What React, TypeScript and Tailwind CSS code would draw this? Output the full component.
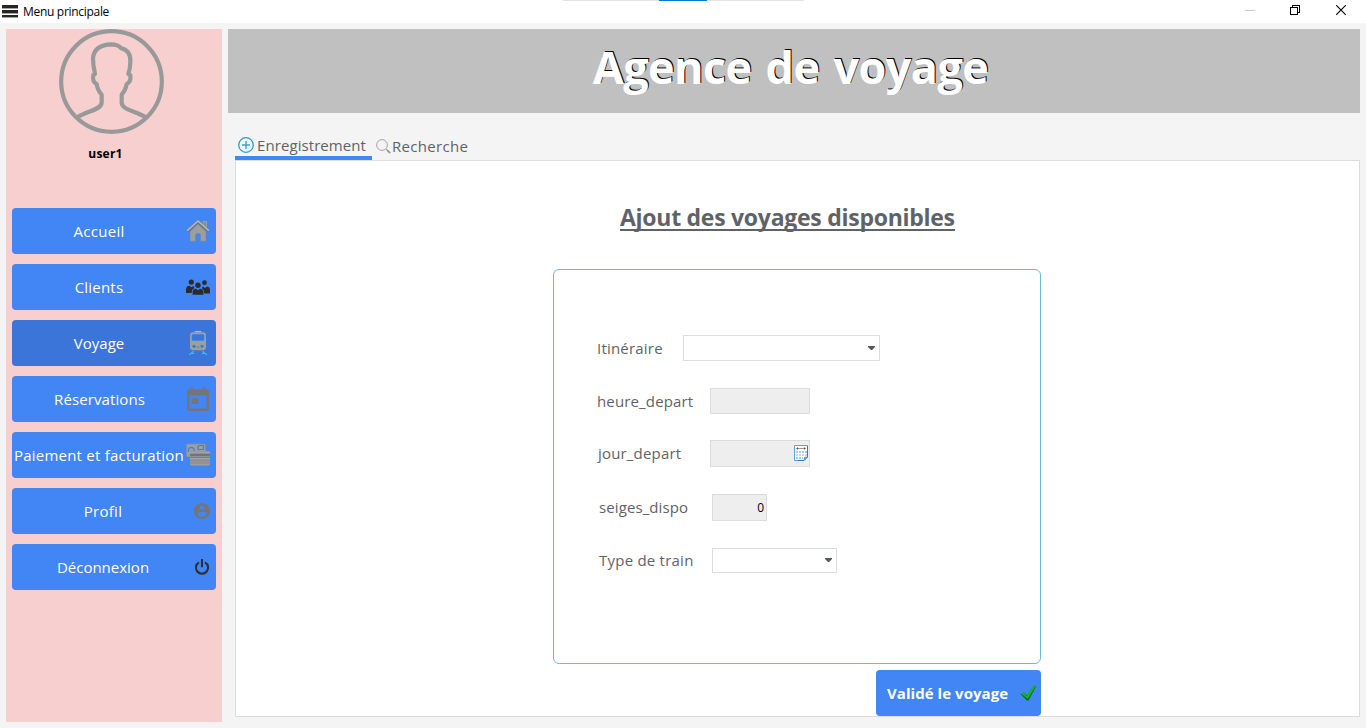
import type { ReactNode } from "react";

function HomeIcon() {
  return (
    <svg className="size-6 shrink-0" viewBox="0 0 24 24">
      <path d="M17 2.500h3.500v6L17 5.300z" fill="#8a8a8a" stroke="#b9b9b9" strokeWidth=".5" />
      <path d="M4 12.500 12 5l8 7.500V22.300h-5.500v-6.300q0-1.500-1.500-1.500h-2q-1.500 0-1.500 1.500v6.300H4z" fill="#9c9ea0" stroke="#808285" strokeWidth=".5" />
      <path d="M1 12.500 12 2.600l11 9.900" fill="none" stroke="#75777a" strokeWidth="2.800" />
      <path d="M1 11.800 12 1.900l11 9.900" fill="none" stroke="#b8babc" strokeWidth="1.500" />
    </svg>
  );
}

function PeopleIcon() {
  return (
    <svg className="size-6 shrink-0" viewBox="0 0 24 24" fill="#2b2b2b">
      <circle cx="5.300" cy="7.100" r="2.600" />
      <circle cx="18.500" cy="7.700" r="2.400" />
      <path d="M0 18v-3.500Q0 11 3.500 10.700L5.500 12.200l1.800-1.300 1.200 2L6.200 15 5.600 18zM24 18.500v-3.500q0-3.300-3-3.600l-2 1.500-2-1.400-1.300 1.400 2 2.600.6 3z" />
      <circle cx="12" cy="10.200" r="3.600" fill="#4285f4" />
      <circle cx="12" cy="10.200" r="2.700" />
      <path d="M6.600 19.700v-2.600q0-3.300 3.500-3.400l1.900 1.500 1.900-1.500q3.500.1 3.500 3.400v2.600z" />
    </svg>
  );
}

function TrainIcon() {
  return (
    <svg className="size-6 shrink-0" viewBox="0 0 24 24">
      <path d="M8.700.600h6.600" stroke="#8fc0e2" strokeWidth="1.200" />
      <path d="M7.500 20.300 3 24M16.500 20.300 21 24M5.500 22.300h2.500M16 22.300h2.500" stroke="#42b4e6" strokeWidth="1.300" fill="none" />
      <rect x="4" y="1.300" width="16" height="17.900" rx="3" fill="#9b9ea2" />
      <path d="M5.600 9V4.500q0-1.600 1.600-1.600h9.600q1.600 0 1.600 1.600V9q0 1-1 1H6.600q-1 0-1-1z" fill="#3b75da" stroke="#6caee0" strokeWidth=".6" />
      <circle cx="8" cy="15.300" r="1.500" fill="#347bcf" />
      <circle cx="16" cy="15.300" r="1.500" fill="#347bcf" />
      <path d="M10.500 16h3" stroke="#777c82" />
    </svg>
  );
}

function TodayIcon() {
  return (
    <svg className="mr-px h-6 w-[22px] shrink-0" viewBox="3 1 18 22" preserveAspectRatio="none" fill="#757575">
      <path d="M19 3h-1V1h-2v2H8V1H6v2H5c-1.110 0-1.990.9-1.990 2L3 21c0 1.100.89 2 2 2h14c1.100 0 2-.9 2-2V5c0-1.100-.9-2-2-2zm0 17.800H5V8.500h14zM7 11.300h5.200v5.200H7z" />
    </svg>
  );
}

function CardsIcon() {
  return (
    <svg className="size-6 shrink-0" viewBox="0 0 24 24">
      <rect x=".4" y=".9" width="19.200" height="13" rx=".8" fill="#98a0aa" stroke="#7f8a98" strokeWidth=".8" />
      <path d="M2.500 9V6L4 4.600h2.500L8 6v3M12 5.500V3.500L13 2.500h4.500v4H12z" fill="none" stroke="#527bbf" strokeWidth="1.200" />
      <rect x="4" y="8" width="20" height="14.500" rx="1" fill="#929292" />
      <path d="M4 9.200h20" stroke="#a8a8a8" />
      <path d="M4 12h20" stroke="#5d6b80" strokeWidth="1.500" />
      <path d="M4 14.500h20" stroke="#4285f4" strokeWidth="1.100" />
      <path d="M4 15.500h20M5 21.800h18" stroke="#aaa" strokeWidth=".8" />
    </svg>
  );
}

function ProfileIcon() {
  return (
    <svg className="size-4 shrink-0" viewBox="2 2 20 20" fill="#757575">
      <path d="M12 2C6.480 2 2 6.480 2 12s4.480 10 10 10 10-4.480 10-10S17.520 2 12 2zm0 3c1.660 0 3 1.340 3 3s-1.340 3-3 3-3-1.340-3-3 1.340-3 3-3zm0 14.200c-2.500 0-4.710-1.280-6-3.220.03-1.990 4-3.080 6-3.080 1.990 0 5.970 1.090 6 3.080-1.290 1.940-3.500 3.220-6 3.220z" />
    </svg>
  );
}

function PowerIcon() {
  return (
    <svg className="size-4 shrink-0" viewBox="0 0 16 16" fill="none" stroke="#2f2f2f" strokeWidth="2.100">
      <path d="M5 3.300a6.100 6.100 0 1 0 6 0M8 0v8.300" />
    </svg>
  );
}

function Avatar() {
  return (
    <svg className="size-[105px]" viewBox="177 87 315 315" fill="none" stroke="#989a99" strokeWidth="12.500">
      <circle cx="334.500" cy="244.500" r="151" />
      <path
        strokeLinejoin="round"
        d="M232 352C262 332 304 330 305 308V284C296 274 291 262 290 252C281 248 277 240 280 225L285 222C280 200 279 190 279 175C281 149 300 134 334 133C350 133 358 138 364 145C384 150 392 165 391 185C391 200 389 210 385 222L391 226C393 240 388 248 380 252C378 265 374 274 365 284V308C366 330 405 332 438 352"
      />
    </svg>
  );
}

function NavButton({ label, icon, tracking, active = false }: { label: string; icon: ReactNode; tracking: string; active?: boolean }) {
  return (
    <button className={`flex h-[46px] w-full items-center rounded-[4px] pr-1.5 text-white ${active ? "bg-[#3b75d9]" : "bg-[#4285f4]"}`}>
      <span className={`flex-1 whitespace-nowrap text-center ${tracking}`}>{label}</span>
      {icon}
    </button>
  );
}

function Sidebar() {
  return (
    <aside className="flex w-[216px] shrink-0 flex-col bg-[#f7cfcf]">
      <div className="flex w-[211px] justify-center">
        <Avatar />
      </div>
      <div className="mt-[11px] w-[199px] text-center text-[12px] font-bold leading-[18px] tracking-[0.2px] text-black">user1</div>
      <nav className="mt-[45px] flex flex-col gap-[10px] px-1.5">
        <NavButton label="Accueil" tracking="tracking-[0.3px]" icon={<HomeIcon />} />
        <NavButton label="Clients" tracking="tracking-[0.2px]" icon={<PeopleIcon />} />
        <NavButton label="Voyage" tracking="tracking-[0.05px]" icon={<TrainIcon />} active />
        <NavButton label="Réservations" tracking="tracking-[0.1px]" icon={<TodayIcon />} />
        <NavButton label="Paiement et facturation" tracking="tracking-[0.22px]" icon={<CardsIcon />} />
        <NavButton label="Profil" tracking="tracking-[0.3px]" icon={<ProfileIcon />} />
        <NavButton label="Déconnexion" tracking="tracking-normal" icon={<PowerIcon />} />
      </nav>
    </aside>
  );
}

function TitleBar() {
  return (
    <header className="relative flex h-[23px] shrink-0 items-start bg-white pl-0.5">
      <svg className="mt-[5px] h-[13px] w-4" viewBox="0 0 16 13" shapeRendering="crispEdges">
        <path d="M0 1.500h16M0 6.500h16M0 11h16" stroke="#252525" strokeWidth="3" />
        <path d="M0 3.500h16M0 8.500h16M0 12.500h16" stroke="#a0a49f" />
      </svg>
      <span className="ml-[5px] mt-[3px] text-[12px] leading-[18px] tracking-[-0.3px] text-black">Menu principale</span>
      <div className="ml-auto flex gap-[35px] pr-[19px] pt-[5px]">
        <svg className="size-[11px]" viewBox="0 0 11 11" shapeRendering="crispEdges">
          <path d="M1 5.500h10" stroke="#c8c8c8" />
        </svg>
        <svg className="size-[11px]" viewBox="0 0 11 11" fill="none" stroke="#000" shapeRendering="crispEdges">
          <path d="M.5 2.500h7v7h-7zM2.500 2V.500h7v7H8" />
        </svg>
        <svg className="size-[11px]" viewBox="0 0 11 11" stroke="#000" strokeWidth="1.100">
          <path d="M.2.200l9.600 9.600M9.800.200l-9.600 9.600" />
        </svg>
      </div>
      <div className="absolute left-[563px] top-0 flex h-px w-[241px] bg-[#e3e3e3] pl-24">
        <div className="h-px w-12 bg-[#0078d7]" />
      </div>
    </header>
  );
}

function Tabs() {
  return (
    <div className="ml-[7px] mt-[21px] flex h-[26px]">
      <div className="flex w-[137px] items-center border-b-4 border-[#4285f4] pl-[3px]">
        <svg className="size-4" viewBox="0 0 16 16" fill="none">
          <circle cx="8" cy="8" r="7.300" stroke="#2f9cc6" strokeWidth="1.300" />
          <path d="M8 4v8M4 8h8" stroke="#2fa8dc" strokeWidth="1.400" />
        </svg>
        <span className="ml-[3px] whitespace-nowrap tracking-[0.08px]">Enregistrement</span>
      </div>
      <div className="flex items-center pb-[3px] pl-1">
        <svg className="mt-px size-[15px]" viewBox="0 0 15 15" fill="none" stroke="#a5a5a5">
          <circle cx="6" cy="6" r="5.400" />
          <path d="m10 10 1.500 1.500" />
          <path d="m11 11 3.200 3.200" strokeWidth="1.800" stroke="#999" />
        </svg>
        <span className="ml-px mt-px tracking-[0.3px]">Recherche</span>
      </div>
    </div>
  );
}

function Arrow() {
  return (
    <svg className="h-1 w-[7px]" viewBox="0 0 7 4" fill="#55595f">
      <path d="M0 0h7v1L4 4H3L0 1z" />
    </svg>
  );
}

function DateIcon() {
  return (
    <svg className="mb-px h-4 w-[14px]" viewBox="0 0 14 16">
      <path d="M.5.500h13v11.500L10 15.500H.500z" fill="#fff" stroke="#5aa5d6" />
      <path d="M13.500 1v11L10 15.500H4" fill="none" stroke="#3775b4" />
      <path d="M2 3.500h10" stroke="#999" />
      <path d="M3.500 2.500v2M10.500 2.500v2" stroke="#555" />
      <path d="M2 7h11M2 13h7" stroke="#a9c4fa" strokeWidth="2" strokeDasharray="2 1" />
      <path d="M2 10h11" stroke="#d3d3d3" strokeWidth="2" strokeDasharray="2 1" />
      <path d="M9.500 15.500 10 12l3.500-.500z" fill="#6f9ecb" />
    </svg>
  );
}

function Field({ label, row, labelBox, field, children }: { label: string; row: string; labelBox: string; field: string; children?: ReactNode }) {
  return (
    <div className={`flex items-center ${row}`}>
      <label className={`shrink-0 whitespace-nowrap ${labelBox}`}>{label}</label>
      <div className={`flex h-full items-center justify-end border border-[#dcdcdc] ${field}`}>{children}</div>
    </div>
  );
}

function VoyageForm() {
  return (
    <section className="ml-[317px] mt-[34px] h-[395px] w-[488px] rounded-[6px] border border-[#6dbcd3] pl-[43px] pt-[65px]">
      <Field label="Itinéraire" row="h-[26px]" labelBox="w-[86px] tracking-[0.2px]" field="w-[197px] bg-white pr-1">
        <Arrow />
      </Field>
      <Field label="heure_depart" row="mt-[27px] h-[26px]" labelBox="w-[113px] tracking-[0.15px]" field="w-[100px] bg-[#eee]" />
      <Field label="jour_depart" row="mt-[26px] h-[27px]" labelBox="w-[113px] pb-0.5 pl-px tracking-[0.18px]" field="w-[100px] bg-[#eee] pr-px">
        <DateIcon />
      </Field>
      <Field label="seiges_dispo" row="mt-[27px] h-[27px]" labelBox="w-[115px] pb-0.5 pl-0.5 tracking-[0.1px]" field="w-[55px] bg-[#eee] pr-0.5">
        <span className="text-[12px] leading-none text-black">0</span>
      </Field>
      <Field label="Type de train" row="mt-[27px] h-[25px]" labelBox="w-[115px] pb-0.5 pl-0.5 tracking-[0.23px]" field="w-[125px] bg-white pb-px pr-1">
        <Arrow />
      </Field>
    </section>
  );
}

function SubmitButton() {
  return (
    <button className="ml-[640px] mt-1.5 flex h-[46px] w-[165px] items-center justify-between rounded-[4px] bg-[#4285f4] pl-[11px] pr-[5px] font-bold text-white">
      <span className="whitespace-nowrap tracking-[0.05px]">Validé le voyage</span>
      <svg className="size-4" viewBox="0 0 16 16">
        <path d="M.5 9 4 7.500l3 3.300L13.500.8 16 1.500 8.500 15.500H7z" fill="#0b6a20" />
        <path d="M.8 8.600 3.800 7.300l3 4L13.300.8l2.300.3-7.800 12.900z" fill="#0fbd15" />
      </svg>
    </button>
  );
}

export default function App() {
  return (
    <div className="flex h-[728px] w-[1366px] flex-col overflow-hidden bg-[#f4f4f4] font-['Open_Sans','Noto_Sans',sans-serif] text-[15px] leading-6 text-[#5f6368]">
      <TitleBar />
      <div className="flex flex-1 gap-1.5 p-1.5">
        <Sidebar />
        <main className="flex flex-1 flex-col">
          <div className="flex h-[84px] shrink-0 items-center justify-center bg-[#c0c0c0] pb-2 pr-[7px]">
            <h1 className="whitespace-nowrap text-[45px] font-bold leading-[66px] tracking-[-0.6px] text-white [text-shadow:1px_-1px_0_#000] [word-spacing:3px]">Agence de voyage</h1>
          </div>
          <Tabs />
          <div className="ml-[7px] h-[557px] border border-[#dadcdf] bg-white">
            <h2 className="ml-96 mt-10 flex h-[34px]">
              <span className="h-[30px] whitespace-nowrap border-b-2 border-[#5f6368] text-[23px] font-bold leading-[32px] tracking-[-0.27px]">Ajout des voyages disponibles</span>
            </h2>
            <VoyageForm />
            <SubmitButton />
          </div>
        </main>
      </div>
    </div>
  );
}
